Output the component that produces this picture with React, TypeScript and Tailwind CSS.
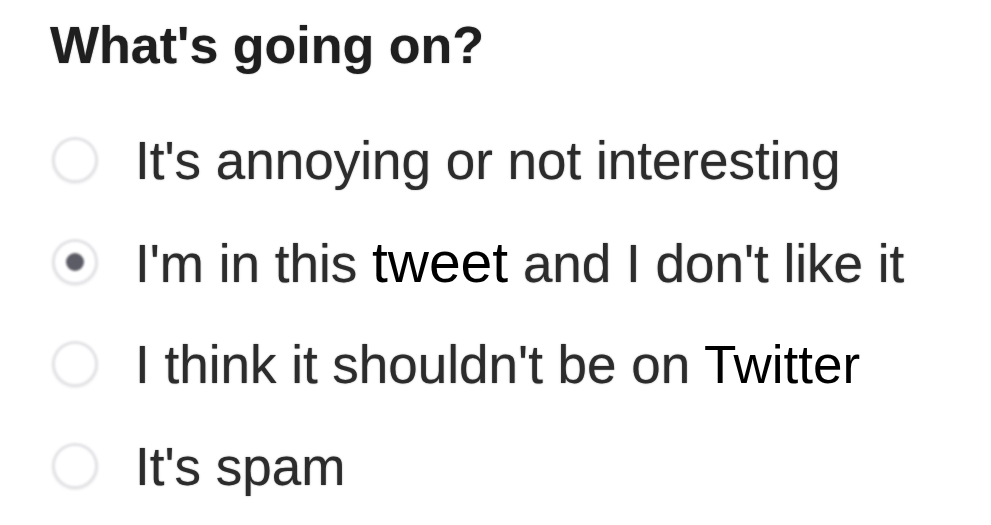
import React from "react";

type Option = {
  parts: { text: string; edited?: boolean; size?: string }[];
  checked?: boolean;
};

const OPTIONS: Option[] = [
  { parts: [{ text: "It's annoying or not interesting" }] },
  {
    parts: [
      { text: "I'm in this " },
      { text: "tweet", edited: true, size: "text-[57px]" },
      { text: " and I don't like it" },
    ],
    checked: true,
  },
  {
    parts: [
      { text: "I think it shouldn't be on " },
      { text: "Twitter", edited: true, size: "text-[53px]" },
    ],
  },
  { parts: [{ text: "It's spam" }] },
];

function Radio({ checked }: { checked?: boolean }) {
  return (
    <span className="ml-[2px] flex h-[46px] w-[46px] shrink-0 items-center justify-center rounded-full border-[3px] border-[#e2e2e6] bg-white shadow-[0_1px_2px_rgba(0,0,0,0.08)] blur-[0.8px]">
      {checked && <span className="h-[18px] w-[18px] rounded-full bg-[#5c5c66]" />}
    </span>
  );
}

export default function App() {
  return (
    <div
      className="h-[525px] w-[991px] overflow-hidden bg-white pl-[50px] pt-[19px]"
      style={{ fontFamily: '"Liberation Sans", Arial, sans-serif' }}
    >
      <h2 className="text-[52px] font-bold leading-none text-[#1f1f1f] [text-shadow:0_0_1.5px_rgba(0,0,0,0.45)]">
        What's going on?
      </h2>

      <ul className="mt-[38px]">
        {OPTIONS.map((opt, i) => (
          <li key={i} className="flex h-[102px] items-center gap-[37px]">
            <Radio checked={opt.checked} />
            <p className="whitespace-pre text-[53px] leading-none text-[#2c2c2c]">
              {opt.parts.map((p, j) =>
                p.edited ? (
                  <span key={j} className={`${p.size} text-black`}>
                    {p.text}
                  </span>
                ) : (
                  <span
                    key={j}
                    className="[text-shadow:0_0_1.5px_rgba(0,0,0,0.5)]"
                  >
                    {p.text}
                  </span>
                )
              )}
            </p>
          </li>
        ))}
      </ul>
    </div>
  );
}
